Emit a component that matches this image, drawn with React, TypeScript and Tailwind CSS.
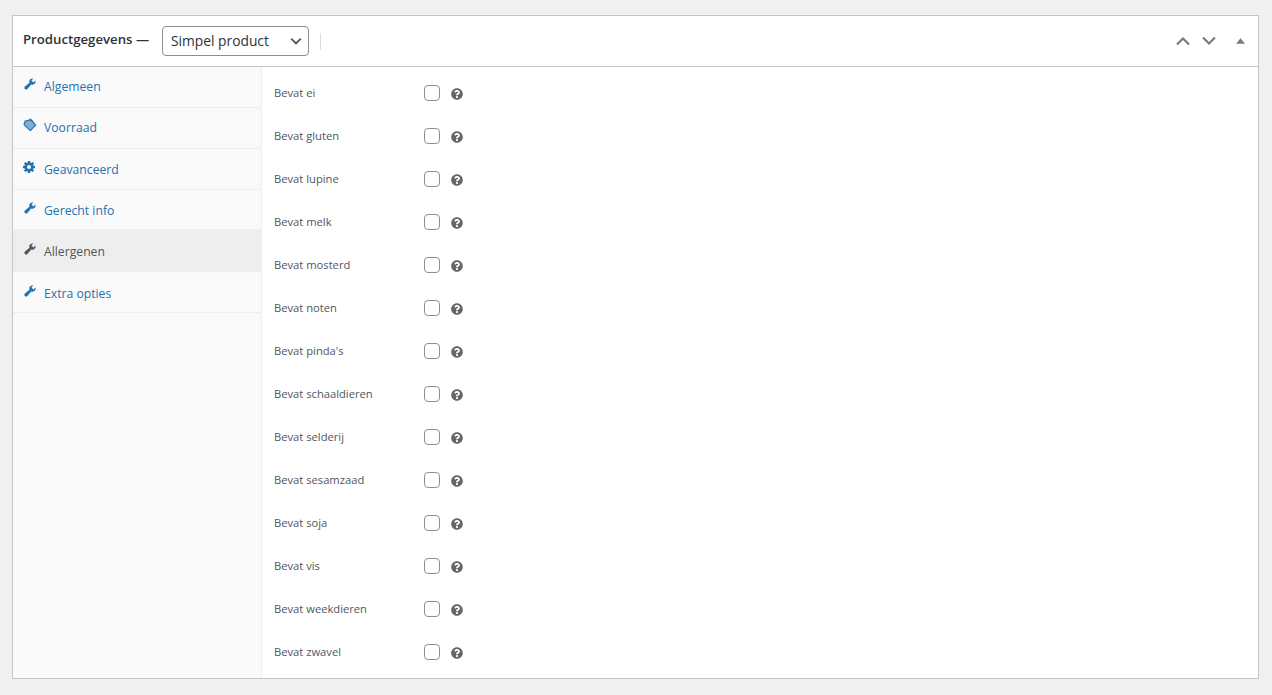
import { FaQuestionCircle } from 'react-icons/fa'

const TABS = [
  { label: 'Algemeen', icon: 'wrench', size: 'h-[41px] text-[#2271b1]' },
  { label: 'Voorraad', icon: 'tag', size: 'h-[41px] text-[#2271b1]' },
  { label: 'Geavanceerd', icon: 'gear', size: 'h-[41px] pt-[2px] text-[#2271b1]' },
  { label: 'Gerecht info', icon: 'wrench', size: 'h-[40px] pt-[2px] text-[#2271b1]' },
  { label: 'Allergenen', icon: 'wrench', size: 'h-[42px] pt-[2px] bg-[#eeeeee] text-[#555555]' },
  { label: 'Extra opties', icon: 'wrench', size: 'h-[41px] pt-[3px] text-[#2271b1]' },
]

const ALLERGENS = [
  'Bevat ei',
  'Bevat gluten',
  'Bevat lupine',
  'Bevat melk',
  'Bevat mosterd',
  'Bevat noten',
  "Bevat pinda's",
  'Bevat schaaldieren',
  'Bevat selderij',
  'Bevat sesamzaad',
  'Bevat soja',
  'Bevat vis',
  'Bevat weekdieren',
  'Bevat zwavel',
]

function TabIcon({ name }: { name: string }) {
  if (name === 'wrench') {
    return (
      <svg viewBox="0 0 20 20" className="w-[14px] h-[14px]" fill="currentColor">
        <path d="M16.68 9.77c-1.34 1.34-3.3 1.67-4.95.99l-5.41 6.52c-.99.99-2.59.99-3.58 0s-.99-2.59 0-3.58l6.52-5.41c-.68-1.65-.35-3.61.99-4.95 1.28-1.28 3.12-1.62 4.72-1.06l-2.89 2.89 2.82 2.82 2.86-2.87c.53 1.58.18 3.39-1.08 4.65z" />
      </svg>
    )
  }
  if (name === 'gear') {
    return (
      <svg viewBox="0 0 20 20" className="w-[12px] h-[12px]" fill="currentColor">
        <path
          fillRule="evenodd"
          d="M8 0h4v2.6c.7.2 1.3.4 1.9.8l1.9-1.9 2.7 2.7-1.9 1.9c.4.6.6 1.2.8 1.9H20v4h-2.6c-.2.7-.4 1.3-.8 1.9l1.9 1.9-2.7 2.7-1.9-1.9c-.6.4-1.2.6-1.9.8V20H8v-2.6c-.7-.2-1.3-.4-1.9-.8l-1.9 1.9-2.7-2.7 1.9-1.9c-.4-.6-.6-1.2-.8-1.9H0V8h2.6c.2-.7.4-1.3.8-1.9L1.5 4.2l2.7-2.7 1.9 1.9c.6-.4 1.2-.6 1.9-.8zM10 6.6a3.4 3.4 0 1 0 0 6.8 3.4 3.4 0 0 0 0-6.8z"
        />
      </svg>
    )
  }
  return (
    <svg viewBox="0 0 20 20" className="w-[14px] h-[14px]" fill="currentColor">
      <path d="M11 2.5 18 10l-7.5 8L1.5 9.5 3 4.5 9 3z" fillOpacity="0.55" stroke="currentColor" strokeWidth="1.7" strokeLinejoin="round" />
      <path d="M9.5 0.8 14 5" stroke="currentColor" strokeWidth="1.6" fill="none" />
    </svg>
  )
}

function AllergenRow({ label }: { label: string }) {
  return (
    <div className="h-[43px] flex items-center pl-3">
      <span className="w-[150px] text-[11.2px] text-[#50575e]">{label}</span>
      <span className="w-4 h-4 rounded-[4px] border border-[#8c8f94] bg-white shrink-0 -mt-[1px]" />
      <span className="ml-[11px] mt-[1px] text-[#666] text-[12px]">
        <FaQuestionCircle />
      </span>
    </div>
  )
}

export default function App() {
  return (
    <div className="min-h-[695px] bg-[#f0f0f1] pt-[15px] px-3 font-['Open_Sans','Noto_Sans',sans-serif]">
      <div className="border border-[#c3c4c7] bg-white w-[1247px]">
        <header className="h-[51px] border-b border-[#c3c4c7] flex items-center pl-[10px] pr-[8px]">
          <h2 className="w-[139px] shrink-0 text-[13.2px] font-semibold text-[#2c3338] -mt-[3px] whitespace-nowrap">Productgegevens —</h2>
          <div className="w-[147px] h-[30px] border border-[#8c8f94] rounded-[4px] flex items-center justify-between pl-2 pr-[4px] text-[13.8px] text-[#2c3338]">
            <span>Simpel product</span>
            <svg viewBox="0 0 20 20" className="w-[16px] h-[16px]" fill="none" stroke="#50575e" strokeWidth="2.4">
              <path d="M4 7l6 6 6-6" />
            </svg>
          </div>
          <span className="ml-[11px] w-px h-[17px] bg-[#dcdcde]" />
          <div className="ml-auto flex items-center text-[#787c82]">
            <svg viewBox="0 0 16 10" className="w-[16px] h-[10px]" fill="none" stroke="currentColor" strokeWidth="2.2">
              <path d="M2 8.5l6-6 6 6" />
            </svg>
            <svg viewBox="0 0 16 10" className="ml-[10px] w-[16px] h-[10px]" fill="none" stroke="currentColor" strokeWidth="2.2">
              <path d="M2 1.5l6 6 6-6" />
            </svg>
            <svg viewBox="0 0 10 6" className="ml-[19px] mr-[5px] w-[9px] h-[6px]" fill="currentColor">
              <path d="M5 0l5 6H0z" />
            </svg>
          </div>
        </header>
        <div className="flex h-[611px]">
          <nav className="w-[249px] shrink-0 bg-[#fafafa] border-r border-[#eeeeee]">
            {TABS.map((tab) => (
              <div
                key={tab.label}
                className={`flex items-center pl-[10px] text-[12.2px] leading-[18px] border-b border-[#eeeeee] ${tab.size}`}
              >
                <span className="w-[21px] -mt-[6px] flex"><TabIcon name={tab.icon} /></span>
                <span>{tab.label}</span>
              </div>
            ))}
          </nav>
          <main className="flex-1 pt-[5px]">
            {ALLERGENS.map((a) => (
              <AllergenRow key={a} label={a} />
            ))}
          </main>
        </div>
      </div>
    </div>
  )
}
